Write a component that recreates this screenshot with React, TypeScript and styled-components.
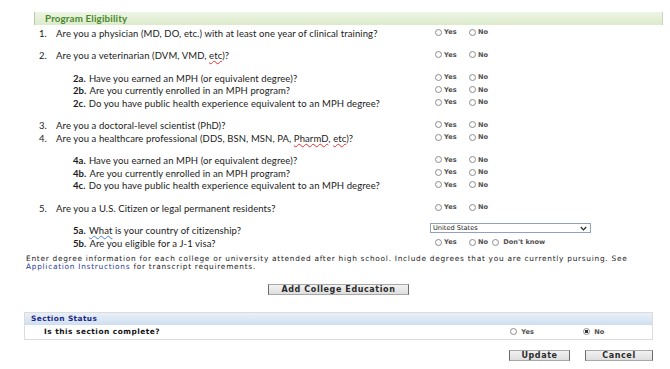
import * as React from "react";
import styled, { createGlobalStyle } from "styled-components";

const GlobalStyle = createGlobalStyle`
	body {
		margin: 0;
		background: #fff;
	}
`;

const Page = styled.div`
	width: 670px;
	height: 369px;
	overflow: hidden;
	padding-top: 12px;
	box-sizing: border-box;
	font-family: Lato, "Open Sans", sans-serif;
	color: #1a1a1a;
`;

const Eligibility = styled.section`
	margin-left: 34px;
	width: 629px;
`;

const GreenHeader = styled.div`
	height: 13px;
	line-height: 13px;
	padding-left: 10px;
	border-left: 1px solid #b9c8ad;
	border-right: 1px solid #c9d6bd;
	background: linear-gradient(#edf5e5, #dcebcb);
	color: #4a8a2c;
	font-weight: 700;
	font-size: 9.8px;
	letter-spacing: 0.15px;
`;

const List = styled.div`
	padding-top: 2px;
`;

const Row = styled.div<{ $gap?: boolean }>`
	display: grid;
	grid-template-columns: 401px 1fr;
	align-items: center;
	height: 12.5px;
	margin-top: ${(p) => (p.$gap ? 10 : 0)}px;
`;

const Question = styled.div<{ $sub?: boolean }>`
	display: flex;
	align-items: center;
	padding-left: ${(p) => (p.$sub ? 39 : 5)}px;
	font-size: 9.5px;
	letter-spacing: 0.1px;
	white-space: nowrap;
`;

const Num = styled.span`
	width: 17px;
`;

const SubNum = styled.b`
	font-weight: 700;
	margin-right: 3px;
`;

const Squiggle = styled.span<{ $color?: string }>`
	text-decoration: underline wavy ${(p) => p.$color || "#e03030"};
	text-decoration-thickness: 0.5px;
	text-underline-offset: 1px;
`;

const Answers = styled.div`
	display: flex;
	align-items: center;
	margin-top: -2px;
`;

const Option = styled.label<{ $w?: number }>`
	display: flex;
	align-items: center;
	gap: 1px;
	width: ${(p) => (p.$w ? `${p.$w}px` : "auto")};
	font-family: "DejaVu Sans", Verdana, sans-serif;
	font-size: 6.6px;
	color: #505050;
	font-weight: 600;
`;

const Dot = styled.span<{ $checked?: boolean }>`
	display: inline-block;
	box-sizing: border-box;
	width: 7px;
	height: 7px;
	border-radius: 50%;
	border: 1px solid #8c8c8c;
	background: ${(p) => (p.$checked ? "radial-gradient(circle, #333 0 1.6px, #fff 1.8px)" : "#fff")};
	margin-right: 1px;
`;

const Select = styled.div`
	display: flex;
	align-items: center;
	justify-content: space-between;
	box-sizing: border-box;
	width: 161px;
	height: 10px;
	margin: -3px 0 0 -5px;
	padding: 0 3px 0 2px;
	border: 1px solid #8fa3bf;
	font-family: "DejaVu Sans", Verdana, sans-serif;
	font-size: 6.6px;
	color: #222;
`;

const Notice = styled.p`
	margin: 5px 0 0 26px;
	width: 622px;
	font-family: "DejaVu Sans", Verdana, sans-serif;
	font-size: 7.4px;
	line-height: 8.5px;
	letter-spacing: 0.72px;
	color: #222;
`;

const Link = styled.span`
	color: #2b3a9c;
`;

const Centered = styled.div`
	display: flex;
	justify-content: center;
	margin: 12px 0 0 24px;
	width: 629px;
`;

const Button = styled.button<{ $w: number }>`
	box-sizing: border-box;
	width: ${(p) => p.$w}px;
	height: 11px;
	padding: 0;
	border: 1px solid #a8a8a8;
	border-left-color: #6a6a6a;
	border-right-color: #6a6a6a;
	background: linear-gradient(#f2f2f2, #dedede);
	font-family: "DejaVu Sans", Verdana, sans-serif;
	font-weight: 700;
	font-size: 8px;
	letter-spacing: 0.6px;
	line-height: 9px;
	color: #2a2a2a;
`;

const StatusBox = styled.section`
	margin: 17px 0 0 24px;
	width: 629px;
	border: 1px solid #dcdcdc;
	box-sizing: border-box;
`;

const BlueHeader = styled.div`
	height: 12px;
	line-height: 12px;
	padding-left: 6px;
	background: linear-gradient(#e9f0f8, #cfdff0);
	color: #1d2a86;
	font-family: "DejaVu Sans", Verdana, sans-serif;
	font-weight: 700;
	font-size: 7.4px;
	letter-spacing: 0.4px;
`;

const StatusRow = styled.div`
	display: grid;
	grid-template-columns: 1fr 73px 69px;
	align-items: center;
	height: 14px;
`;

const StatusLabel = styled.div`
	padding-left: 19px;
	font-family: "DejaVu Sans", Verdana, sans-serif;
	font-weight: 700;
	font-size: 7.4px;
	letter-spacing: 0.5px;
	color: #111;
`;

const Actions = styled.div`
	display: flex;
	justify-content: flex-end;
	gap: 15px;
	margin: 10px 0 0 24px;
	width: 629px;
`;

type Q = {
	num: string;
	text: React.ReactNode;
	sub?: boolean;
	gap?: boolean;
	answer?: "yn" | "select" | "ynd";
};

const questions: Q[] = [
	{ num: "1.", text: "Are you a physician (MD, DO, etc.) with at least one year of clinical training?" },
	{
		num: "2.",
		gap: true,
		text: (
			<>
				Are you a veterinarian (DVM, VMD, <Squiggle>etc</Squiggle>)?
			</>
		),
	},
	{ num: "2a.", sub: true, gap: true, text: "Have you earned an MPH (or equivalent degree)?" },
	{ num: "2b.", sub: true, text: "Are you currently enrolled in an MPH program?" },
	{ num: "2c.", sub: true, text: "Do you have public health experience equivalent to an MPH degree?" },
	{ num: "3.", gap: true, text: "Are you a doctoral-level scientist (PhD)?" },
	{
		num: "4.",
		text: (
			<>
				Are you a healthcare professional (DDS, BSN, MSN, PA, <Squiggle>PharmD</Squiggle>,{" "}
				<Squiggle>etc</Squiggle>)?
			</>
		),
	},
	{ num: "4a.", sub: true, gap: true, text: "Have you earned an MPH (or equivalent degree)?" },
	{ num: "4b.", sub: true, text: "Are you currently enrolled in an MPH program?" },
	{ num: "4c.", sub: true, text: "Do you have public health experience equivalent to an MPH degree?" },
	{ num: "5.", gap: true, text: "Are you a U.S. Citizen or legal permanent residents?" },
	{
		num: "5a.",
		sub: true,
		gap: true,
		answer: "select",
		text: (
			<>
				<Squiggle $color="#4a7fd0">What</Squiggle> is your country of citizenship?
			</>
		),
	},
	{ num: "5b.", sub: true, answer: "ynd", text: "Are you eligible for a J-1 visa?" },
];

function Chevron() {
	return (
		<svg width="7" height="5" viewBox="0 0 7 5">
			<path d="M0.8 1 L3.5 3.8 L6.2 1" fill="none" stroke="#222" strokeWidth="1.2" />
		</svg>
	);
}

function AnswerCell({ kind }: { kind: Q["answer"] }) {
	if (kind === "select") {
		return (
			<Answers>
				<Select>
					<span>United States</span>
					<Chevron />
				</Select>
			</Answers>
		);
	}
	return (
		<Answers>
			<Option $w={34}>
				<Dot />
				Yes
			</Option>
			<Option $w={kind === "ynd" ? 23 : undefined}>
				<Dot />
				No
			</Option>
			{kind === "ynd" && (
				<Option>
					<Dot />
					&nbsp;Don't know
				</Option>
			)}
		</Answers>
	);
}

export default function App() {
	return (
		<Page>
			<GlobalStyle />
			<Eligibility>
				<GreenHeader>Program Eligibility</GreenHeader>
				<List>
					{questions.map((q) => (
						<Row key={q.num} $gap={q.gap}>
							<Question $sub={q.sub}>
								{q.sub ? <SubNum>{q.num}</SubNum> : <Num>{q.num}</Num>}
								<span>{q.text}</span>
							</Question>
							<AnswerCell kind={q.answer} />
						</Row>
					))}
				</List>
			</Eligibility>

			<Notice>
				Enter degree information for each college or university attended after high school. Include degrees
				that you are currently pursuing. See <Link>Application Instructions</Link> for transcript requirements.
			</Notice>

			<Centered>
				<Button $w={141}>Add College Education</Button>
			</Centered>

			<StatusBox>
				<BlueHeader>Section Status</BlueHeader>
				<StatusRow>
					<StatusLabel>Is this section complete?</StatusLabel>
					<Option>
						<Dot />
						&nbsp;Yes
					</Option>
					<Option>
						<Dot $checked />
						&nbsp;No
					</Option>
				</StatusRow>
			</StatusBox>

			<Actions>
				<Button $w={61}>Update</Button>
				<Button $w={68}>Cancel</Button>
			</Actions>
		</Page>
	);
}
